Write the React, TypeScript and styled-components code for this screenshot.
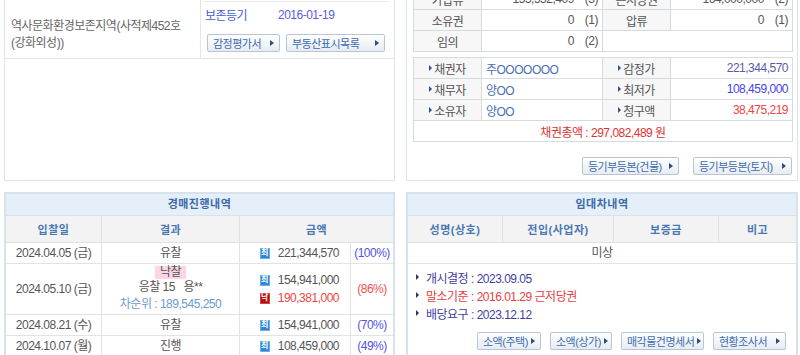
import React from "react";
import styled, { createGlobalStyle } from "styled-components";

const GlobalStyle = createGlobalStyle`
  html, body {
    margin: 0;
    padding: 0;
    background: #fff;
    overflow: hidden;
  }
  body {
    font-family: "Liberation Sans", "Noto Sans CJK KR", sans-serif;
    font-size: 12px;
    letter-spacing: -0.5px;
    color: #555;
  }
`;

const Viewport = styled.div`
  width: 800px;
  height: 355px;
  overflow: hidden;
`;

// page is scrolled: the top panels start above the window
const Page = styled.div`
  display: grid;
  grid-template-columns: 391px 392px;
  column-gap: 11px;
  row-gap: 11px;
  margin-top: -20px;
  padding-left: 4px;
`;

const Panel = styled.section`
  border: 1px solid #dde4eb;
  background: #fff;
  min-width: 0;
`;

const BoardPanel = styled.section`
  border: 2px solid #d8e2ed;
  background: #fff;
  min-width: 0;
`;

/* ---------- top left ---------- */

const SummaryRow = styled.div`
  display: grid;
  grid-template-columns: 196px 1fr;
  height: 77px;
  border-bottom: 1px solid #e2e6ea;
`;

const ZoneCell = styled.div`
  display: flex;
  flex-direction: column;
  justify-content: flex-end;
  padding: 0 4px 6px 6px;
  border-right: 1px solid #e2e6ea;
  line-height: 17px;
  color: #666;
  white-space: nowrap;
`;

const RegCell = styled.div`
  display: flex;
  flex-direction: column;
  padding: 0 5px 0 3px;
`;

const RegLine = styled.div<{ $h: number; $ruled?: boolean }>`
  display: flex;
  align-items: center;
  height: ${(p) => p.$h}px;
  padding-left: 1px;
  border-bottom: ${(p) => (p.$ruled ? "1px solid #e6e9ed" : "none")};
`;

const RegLabel = styled.span`
  width: 73px;
  color: #3f5fd0;
`;

const RegDate = styled.span`
  color: #5b5bdf;
`;

/* ---------- top right ---------- */

const RightBody = styled.div`
  padding: 7px 4px 5px 6px;
`;

const InfoGrid = styled.div<{ $gap?: number }>`
  display: grid;
  grid-template-columns: 68px 121px 68px 122px;
  grid-auto-rows: 21px;
  border-top: 1px solid #d6dbe0;
  border-left: 1px solid #d6dbe0;
  margin-top: ${(p) => p.$gap ?? 0}px;
`;

const Cell = styled.div<{
  $label?: boolean;
  $align?: "left" | "right" | "center";
  $span?: number;
  $color?: string;
}>`
  grid-column: span ${(p) => p.$span ?? 1};
  display: flex;
  align-items: center;
  justify-content: ${(p) =>
    p.$align === "right" ? "flex-end" : p.$align === "left" ? "flex-start" : "center"};
  padding: 0 4px;
  border-right: 1px solid #d6dbe0;
  border-bottom: 1px solid #d6dbe0;
  background: ${(p) => (p.$label ? "#f7f7f7" : "#fff")};
  color: ${(p) => p.$color ?? "#555"};
  white-space: nowrap;
  overflow: hidden;
`;

const Count = styled.span`
  margin-left: 11px;
`;

const Pointer = styled.span`
  display: inline-block;
  width: 0;
  height: 0;
  border-left: 3px solid #2f4f8f;
  border-top: 3px solid transparent;
  border-bottom: 3px solid transparent;
  margin-right: 2px;
`;

const Total = styled.span`
  color: #dd3333;
`;

/* ---------- buttons ---------- */

const ButtonRow = styled.div<{ $top: number; $gap: number; $end?: boolean; $padRight?: number; $padLeft?: number }>`
  display: flex;
  justify-content: ${(p) => (p.$end ? "flex-end" : "flex-start")};
  gap: ${(p) => p.$gap}px;
  margin-top: ${(p) => p.$top}px;
  padding-right: ${(p) => p.$padRight ?? 0}px;
  padding-left: ${(p) => p.$padLeft ?? 0}px;
`;

const DocButton = styled.button<{ $w: number }>`
  box-sizing: border-box;
  width: ${(p) => p.$w}px;
  height: 18px;
  padding: 0 5px 0 5px;
  display: inline-flex;
  align-items: center;
  justify-content: space-between;
  border: 1px solid #b8c5d4;
  border-radius: 2px;
  background: linear-gradient(#ffffff, #e7ecf2);
  color: #3b6bb0;
  font-family: inherit;
  font-size: 11px;
  letter-spacing: -0.5px;
  white-space: nowrap;
  cursor: pointer;
  &::after {
    content: "";
    width: 0;
    height: 0;
    border-left: 4px solid #2f4a7d;
    border-top: 3px solid transparent;
    border-bottom: 3px solid transparent;
    margin-left: 3px;
  }
`;

/* ---------- bottom boards ---------- */

const BoardTitle = styled.div`
  height: 21px;
  line-height: 21px;
  background: #e5effa;
  border-bottom: 1px solid #d8e2ed;
  color: #3c6aa7;
  font-size: 11px;
  font-weight: bold;
  letter-spacing: 0.5px;
  text-align: center;
`;

const Board = styled.div<{ $cols: string }>`
  display: grid;
  grid-template-columns: ${(p) => p.$cols};
`;

const HeadCell = styled.div<{ $span?: number; $last?: boolean }>`
  grid-column: span ${(p) => p.$span ?? 1};
  height: 27px;
  display: flex;
  align-items: center;
  justify-content: center;
  background: #f3f3f3;
  border-right: ${(p) => (p.$last ? "none" : "1px solid #e0e0e0")};
  border-bottom: 1px solid #e0e0e0;
  color: #4a78b5;
  font-size: 11px;
  font-weight: bold;
  letter-spacing: 0.5px;
  box-sizing: border-box;
`;

const DataCell = styled.div<{
  $h: number;
  $span?: number;
  $last?: boolean;
  $align?: "center" | "right";
  $color?: string;
  $lh?: number;
}>`
  grid-column: span ${(p) => p.$span ?? 1};
  box-sizing: border-box;
  height: ${(p) => p.$h}px;
  display: flex;
  flex-direction: column;
  justify-content: center;
  align-items: ${(p) => (p.$align === "right" ? "flex-end" : "center")};
  padding-right: ${(p) => (p.$align === "right" ? "11px" : "0")};
  border-right: ${(p) => (p.$last ? "none" : "1px solid #e3e3e3")};
  border-bottom: 1px solid #e3e3e3;
  color: ${(p) => p.$color ?? "#555"};
  line-height: ${(p) => p.$lh ?? 17}px;
  white-space: nowrap;
`;

const Line = styled.div<{ $color?: string }>`
  display: flex;
  align-items: center;
  color: ${(p) => p.$color ?? "inherit"};
`;

const SoldMark = styled.span`
  display: inline-block;
  padding: 0 5px;
  line-height: 13px;
  background: #fcd6e6;
  color: #555;
`;

const PriceTag = styled.span<{ $kind: "min" | "sold" }>`
  display: inline-flex;
  align-items: center;
  justify-content: center;
  width: 10px;
  height: 11px;
  margin-right: 8px;
  border-radius: 1px;
  background: ${(p) => (p.$kind === "sold" ? "#b3120f" : "#2f86d6")};
  box-shadow: inset 0 0 0 1px ${(p) => (p.$kind === "sold" ? "#d04040" : "#6aaee8")};
  color: #fff;
  font-size: 8px;
  font-weight: bold;
  letter-spacing: 0;
  line-height: 1;
`;

const NoticeList = styled.ul`
  list-style: none;
  margin: 0;
  padding: 4px 0 0 8px;
`;

const Notice = styled.li<{ $color: string }>`
  display: flex;
  align-items: center;
  height: 18px;
  color: ${(p) => p.$color};
  &::before {
    content: "";
    width: 0;
    height: 0;
    border-left: 3px solid #2c3566;
    border-top: 3px solid transparent;
    border-bottom: 3px solid transparent;
    margin-right: 7px;
  }
`;

const rights = [
  { label: "가압류", value: "155,552,409", n: 3, label2: "근저당권", value2: "164,000,000", n2: 2 },
  { label: "소유권", value: "0", n: 1, label2: "압류", value2: "0", n2: 1 },
];

const parties = [
  { label: "채권자", value: "주OOOOOOO", label2: "감정가", value2: "221,344,570", color2: "#5a5aaa" },
  { label: "채무자", value: "양OO", label2: "최저가", value2: "108,459,000", color2: "#4343ea" },
  { label: "소유자", value: "양OO", label2: "청구액", value2: "38,475,219", color2: "#ee4545" },
];

const rounds = [
  { date: "2024.04.05 (금)", result: "유찰", price: "221,344,570", pct: "(100%)" },
  { date: "2024.08.21 (수)", result: "유찰", price: "154,941,000", pct: "(70%)" },
  { date: "2024.10.07 (월)", result: "진행", price: "108,459,000", pct: "(49%)" },
];

const AUCTION_COLS = "96px 138px 111px 42px";
const LEASE_COLS = "95px 111px 105px 77px";

function RoundRow({ r }: { r: (typeof rounds)[number] }) {
  return (
    <>
      <DataCell $h={21}>{r.date}</DataCell>
      <DataCell $h={21}>{r.result}</DataCell>
      <DataCell $h={21} $align="right">
        <Line>
          <PriceTag $kind="min">최</PriceTag>
          {r.price}
        </Line>
      </DataCell>
      <DataCell $h={21} $last $color="#5252e6">
        {r.pct}
      </DataCell>
    </>
  );
}

export default function App() {
  return (
    <Viewport>
      <GlobalStyle />
      <Page>
        <Panel>
          <SummaryRow>
            <ZoneCell>
              <span>역사문화환경보존지역(사적제452호</span>
              <span>(강화외성))</span>
            </ZoneCell>
            <RegCell>
              {/* previous register entry, scrolled out of view */}
              <RegLine $h={20} $ruled />
              <RegLine $h={25}>
                <RegLabel>보존등기</RegLabel>
                <RegDate>2016-01-19</RegDate>
              </RegLine>
              <ButtonRow $top={7} $gap={6} $padLeft={3}>
                <DocButton $w={73}>감정평가서</DocButton>
                <DocButton $w={99}>부동산표시목록</DocButton>
              </ButtonRow>
            </RegCell>
          </SummaryRow>
        </Panel>

        <Panel>
          <RightBody>
            <InfoGrid>
              {rights.map((r) => (
                <React.Fragment key={r.label}>
                  <Cell $label>{r.label}</Cell>
                  <Cell $align="right">
                    {r.value}
                    <Count>({r.n})</Count>
                  </Cell>
                  <Cell $label>{r.label2}</Cell>
                  <Cell $align="right">
                    {r.value2}
                    <Count>({r.n2})</Count>
                  </Cell>
                </React.Fragment>
              ))}
              <Cell $label>임의</Cell>
              <Cell $align="right">
                0<Count>(2)</Count>
              </Cell>
              <Cell $span={2} />
            </InfoGrid>

            <InfoGrid $gap={5}>
              {parties.map((p) => (
                <React.Fragment key={p.label}>
                  <Cell $label>
                    <Pointer />
                    {p.label}
                  </Cell>
                  <Cell $align="left" $color="#4a6fb5">
                    {p.value}
                  </Cell>
                  <Cell $label>
                    <Pointer />
                    {p.label2}
                  </Cell>
                  <Cell $align="right" $color={p.color2}>
                    {p.value2}
                  </Cell>
                </React.Fragment>
              ))}
              <Cell $span={4}>
                <Total>채권총액 : 297,082,489 원</Total>
              </Cell>
            </InfoGrid>

            <ButtonRow $top={15} $gap={14} $end $padRight={1}>
              <DocButton $w={97}>등기부등본(건물)</DocButton>
              <DocButton $w={99}>등기부등본(토지)</DocButton>
            </ButtonRow>
          </RightBody>
        </Panel>

        <BoardPanel>
          <BoardTitle>경매진행내역</BoardTitle>
          <Board $cols={AUCTION_COLS}>
            <HeadCell>입찰일</HeadCell>
            <HeadCell>결과</HeadCell>
            <HeadCell $span={2} $last>
              금액
            </HeadCell>

            <RoundRow r={rounds[0]} />

            <DataCell $h={51}>2024.05.10 (금)</DataCell>
            <DataCell $h={51}>
              <Line>
                <SoldMark>낙찰</SoldMark>
              </Line>
              <Line>응찰 15&nbsp;&nbsp;&nbsp;용**</Line>
              <Line $color="#6a9bd1">차순위 : 189,545,250</Line>
            </DataCell>
            <DataCell $h={51} $align="right" $lh={18}>
              <Line>
                <PriceTag $kind="min">최</PriceTag>
                154,941,000
              </Line>
              <Line $color="#ee4545">
                <PriceTag $kind="sold">낙</PriceTag>
                190,381,000
              </Line>
            </DataCell>
            <DataCell $h={51} $last $color="#ef5050">
              (86%)
            </DataCell>

            <RoundRow r={rounds[1]} />
            <RoundRow r={rounds[2]} />
          </Board>
        </BoardPanel>

        <BoardPanel>
          <BoardTitle>임대차내역</BoardTitle>
          <Board $cols={LEASE_COLS}>
            <HeadCell>성명(상호)</HeadCell>
            <HeadCell>전입(사업자)</HeadCell>
            <HeadCell>보증금</HeadCell>
            <HeadCell $last>비고</HeadCell>
            <DataCell $h={21} $span={4} $last>
              미상
            </DataCell>
          </Board>
          <NoticeList>
            <Notice $color="#3f3f9f">개시결정 : 2023.09.05</Notice>
            <Notice $color="#e84040">말소기준 : 2016.01.29 근저당권</Notice>
            <Notice $color="#3f3f9f">배당요구 : 2023.12.12</Notice>
          </NoticeList>
          <ButtonRow $top={10} $gap={9} $end $padRight={10}>
            <DocButton $w={64}>소액(주택)</DocButton>
            <DocButton $w={62}>소액(상가)</DocButton>
            <DocButton $w={83}>매각물건명세서</DocButton>
            <DocButton $w={73}>현황조사서</DocButton>
          </ButtonRow>
        </BoardPanel>
      </Page>
    </Viewport>
  );
}
